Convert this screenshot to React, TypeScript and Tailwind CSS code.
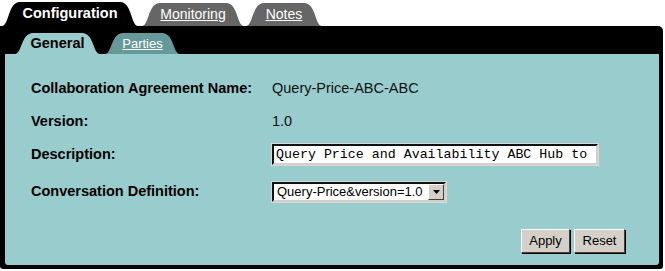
// Agreement editor: tabbed panel with the General sub-tab open

interface TabProps {
  label: string;
  width: number;
  height: number;
  color: string;
  className?: string;
  labelClassName: string;
}

// tab with a flared bell shape, drawn behind its label
function Tab({ label, width, height, color, className = '', labelClassName }: TabProps) {
  const c = 18;
  const path = `M0 ${height} C7 ${height} 6 0 ${c} 0 L${width - c} 0 C${width - 6} 0 ${width - 7} ${height} ${width} ${height} Z`;
  return (
    <div className={`relative flex items-center justify-center ${className}`} style={{ width, height }}>
      <svg className="absolute inset-0" width={width} height={height} viewBox={`0 0 ${width} ${height}`}>
        <path d={path} fill={color} />
      </svg>
      <span className={`relative ${labelClassName}`}>{label}</span>
    </div>
  );
}

const rows = [
  { label: 'Collaboration Agreement Name:', kind: 'text', value: 'Query-Price-ABC-ABC' },
  { label: 'Version:', kind: 'text', value: '1.0' },
  { label: 'Description:', kind: 'input', value: 'Query Price and Availability ABC Hub to' },
];

export default function App() {
  return (
    <div className="h-[271px] w-[665px] bg-white font-['Liberation_Sans',Arial,sans-serif]">
      {/* top tabs */}
      <div className="flex h-[26px] items-end">
        <Tab
          label="Configuration"
          width={136}
          height={24}
          color="#000000"
          className="ml-[2px]"
          labelClassName="text-[14.5px] font-bold text-white"
        />
        <Tab
          label="Monitoring"
          width={102}
          height={23}
          color="#666666"
          className="ml-[4px]"
          labelClassName="text-[14px] text-white underline"
        />
        <Tab
          label="Notes"
          width={76}
          height={23}
          color="#666666"
          className="ml-[2px]"
          labelClassName="text-[14px] text-white underline"
        />
      </div>

      {/* black frame */}
      <div className="w-[663px] rounded-tr-[5px] rounded-b-[3px] bg-black pt-[7px] pr-[4px] pb-[4px] pl-[5px]">
        <div className="flex h-[21px] items-end">
          <Tab
            label="General"
            width={85}
            height={21}
            color="#99cccc"
            className="ml-[10px]"
            labelClassName="text-[14.5px] font-bold text-black"
          />
          <Tab
            label="Parties"
            width={75}
            height={21}
            color="#669999"
            className="ml-[5px]"
            labelClassName="text-[13px] text-white underline"
          />
        </div>

        <div className="h-[211px] rounded-b-[3px] bg-[#99cccc] pt-[18px] pl-[26px] pr-[34px]">
          {rows.map(row => (
            <div key={row.label} className="flex h-[33px] items-center">
              <div className="w-[240px] text-[14.5px] font-bold text-black">{row.label}</div>
              {row.kind === 'text' ? (
                <div className="pl-[1px] text-[14.5px] text-[#111]">{row.value}</div>
              ) : (
                <div className="border border-[#d8d8d8]">
                  <div className="h-[21px] w-[326px] border-2 border-t-[#111] border-l-[#111] border-r-[#d4d0c8] border-b-[#d4d0c8] bg-white pl-[2px] font-['Liberation_Mono','Courier_New',monospace] text-[13.3px] leading-[17px] whitespace-nowrap overflow-hidden text-black">
                    {row.value}
                  </div>
                </div>
              )}
            </div>
          ))}

          <div className="mt-[3px] flex h-[35px] items-center">
            <div className="w-[240px] text-[14.5px] font-bold text-black">Conversation Definition:</div>
            <div className="border border-[#d8d8d8]">
              <div className="flex h-[20px] w-[174px] items-center border-2 border-t-[#111] border-l-[#111] border-r-[#d4d0c8] border-b-[#d4d0c8] bg-white">
                <div className="flex-1 pl-[3px] text-[13px] leading-[16px] text-black">Query-Price&amp;version=1.0</div>
                <div className="flex h-[16px] w-[16px] items-center justify-center border border-t-white border-l-white border-r-[#404040] border-b-[#404040] bg-[#d4d0c8]">
                  <svg width="7" height="4" viewBox="0 0 7 4">
                    <path d="M0 0 H7 L3.5 4 Z" fill="#000" />
                  </svg>
                </div>
              </div>
            </div>
          </div>

          <div className="mt-[20px] flex justify-end gap-[4px]">
            <button className="h-[24px] w-[49px] border border-t-white border-l-white border-r-[#404040] border-b-[#404040] bg-[#d4d0c8] text-[13px] text-black shadow-[1px_1px_0_#000]">
              Apply
            </button>
            <button className="h-[24px] w-[51px] border border-t-white border-l-white border-r-[#404040] border-b-[#404040] bg-[#d4d0c8] text-[13px] text-black shadow-[1px_1px_0_#000]">
              Reset
            </button>
          </div>
        </div>
      </div>
    </div>
  );
}
